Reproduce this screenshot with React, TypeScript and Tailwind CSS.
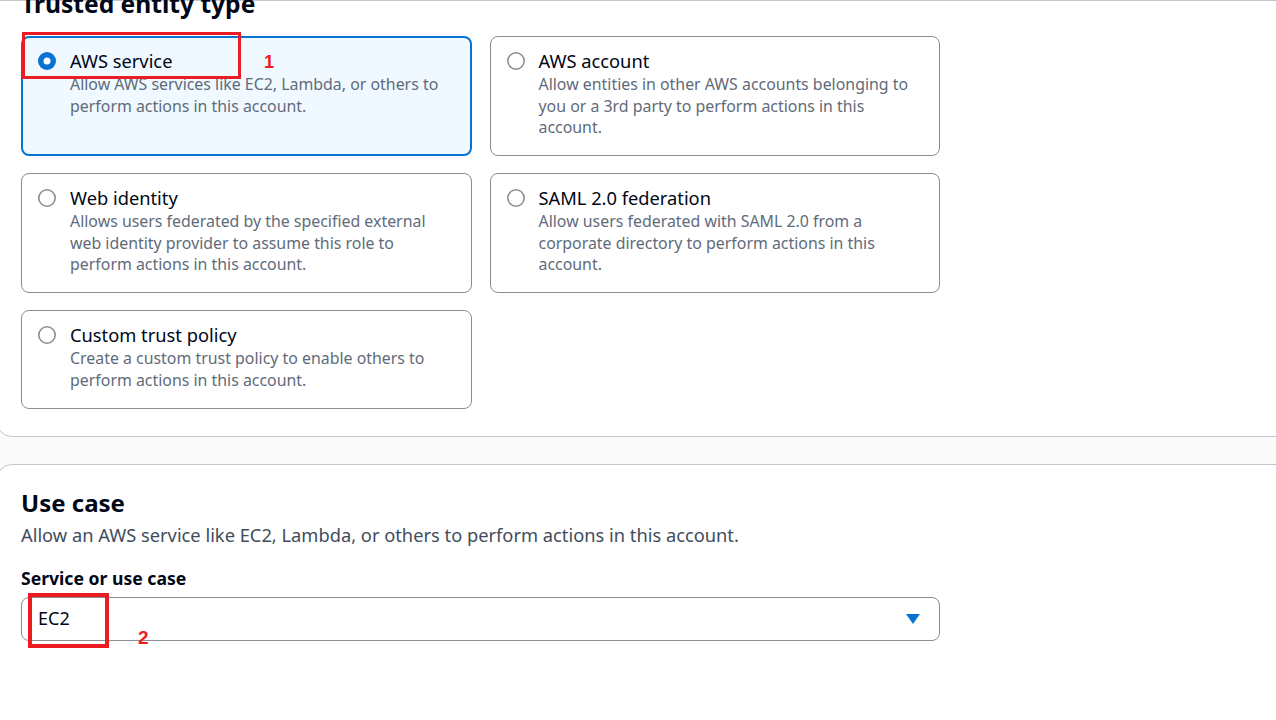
import { useState } from "react";

type Tile = {
    id: string;
    title: string;
    text: string;
};

const tiles: Tile[] = [
    {
        id: "service",
        title: "AWS service",
        text: "Allow AWS services like EC2, Lambda, or others to perform actions in this account.",
    },
    {
        id: "account",
        title: "AWS account",
        text: "Allow entities in other AWS accounts belonging to you or a 3rd party to perform actions in this account.",
    },
    {
        id: "web",
        title: "Web identity",
        text: "Allows users federated by the specified external web identity provider to assume this role to perform actions in this account.",
    },
    {
        id: "saml",
        title: "SAML 2.0 federation",
        text: "Allow users federated with SAML 2.0 from a corporate directory to perform actions in this account.",
    },
    {
        id: "custom",
        title: "Custom trust policy",
        text: "Create a custom trust policy to enable others to perform actions in this account.",
    },
];

const Radio = ({ checked }: { checked: boolean }) => (
    <svg width="18" height="18" viewBox="0 0 18 18" className="shrink-0">
        {checked ? (
            <>
                <circle cx="9" cy="9" r="9" fill="#0972d3" />
                <circle cx="9" cy="9" r="3.5" fill="#ffffff" />
            </>
        ) : (
            <circle cx="9" cy="9" r="8.2" fill="#ffffff" stroke="#8c8c94" strokeWidth="1.6" />
        )}
    </svg>
);

const App = () => {
    const [selected, setSelected] = useState("service");

    return (
        <div
            className="relative w-full h-[720px] overflow-hidden bg-[#fafafa] text-[#000716]"
            style={{ fontFamily: '"Noto Sans", "Open Sans", Arial, sans-serif' }}
        >
            {/* trusted entity panel */}
            <div className="-ml-1 -mr-6 bg-white border border-[#c6c6cd] rounded-bl-2xl pl-6 pb-[27px]">
                <h2 className="text-[24.6px] font-bold leading-[30px] -mt-[12px] mb-[17px]">
                    Trusted entity type
                </h2>
                <div className="grid grid-cols-2 w-[919px] gap-x-[18px] gap-y-[17px]">
                    {tiles.map((t) => {
                        const on = selected === t.id;
                        return (
                            <div
                                key={t.id}
                                onClick={() => setSelected(t.id)}
                                className={
                                    on
                                        ? "flex gap-[14px] rounded-lg border-2 border-[#0972d3] bg-[#f0f9ff] pt-[10px] pb-[15.5px] pl-[15px] pr-[15px] cursor-pointer"
                                        : "flex gap-[14px] rounded-lg border border-[#8c8c94] bg-white pt-[11px] pb-[16.5px] pl-4 pr-4 cursor-pointer"
                                }
                            >
                                <div className="h-[26px] flex items-center">
                                    <Radio checked={on} />
                                </div>
                                <div>
                                    <div className="text-[18.3px] leading-[26px]">{t.title}</div>
                                    <div className="text-[15.9px] leading-[21.5px] text-[#5f6b7a]">{t.text}</div>
                                </div>
                            </div>
                        );
                    })}
                </div>
            </div>

            {/* use case panel */}
            <div className="-ml-1 -mr-6 mt-[27px] bg-white border border-[#c6c6cd] rounded-tl-2xl pl-6 pt-[23px] pb-40">
                <h2 className="text-2xl font-bold leading-[30px]">Use case</h2>
                <p className="mt-[5px] text-[18.3px] leading-6 text-[#414d5c]">
                    Allow an AWS service like EC2, Lambda, or others to perform actions in this account.
                </p>
                <div className="mt-[19px] text-[17.6px] font-bold leading-6">Service or use case</div>
                <div className="mt-[7px] w-[919px] h-[44px] flex items-center justify-between rounded-lg border border-[#8c8c94] bg-white pl-4 pr-[19px]">
                    <span className="text-[18px]">EC2</span>
                    <svg width="14" height="10" viewBox="0 0 14 10">
                        <path d="M0 0 H14 L7 10 Z" fill="#0972d3" />
                    </svg>
                </div>
            </div>

            {/* annotations */}
            <div className="absolute left-[22px] top-[32px] w-[219px] h-[47px] border-[3px] border-[#ec1c24]" />
            <div
                className="absolute left-[264px] top-[48px] text-lg font-bold text-[#ec1c24]"
                style={{ fontFamily: '"Liberation Sans", Arial, sans-serif' }}
            >
                1
            </div>
            <div className="absolute left-[28px] top-[593px] w-[81px] h-[55px] border-4 border-[#ec1c24]" />
            <div
                className="absolute left-[138px] top-[624px] text-[19px] font-bold text-[#ec1c24]"
                style={{ fontFamily: '"Liberation Sans", Arial, sans-serif' }}
            >
                2
            </div>
        </div>
    );
};

export default App;
